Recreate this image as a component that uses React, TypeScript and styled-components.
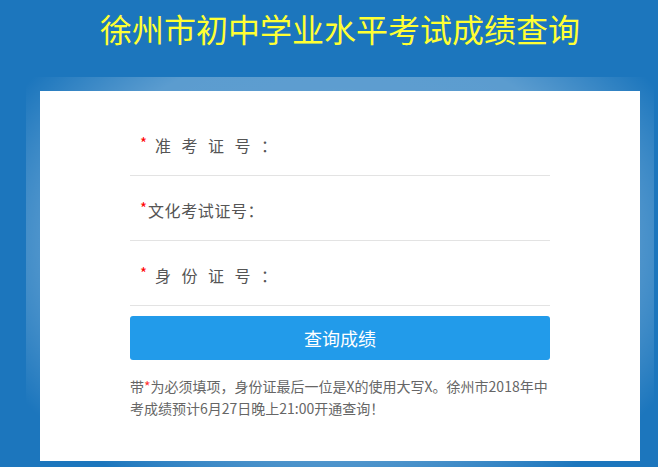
import { createGlobalStyle, styled } from "styled-components";

const GlobalStyle = createGlobalStyle`
  html, body {
    margin: 0;
    padding: 0;
    overflow: hidden;
    background: #1c76bd;
  }
  body {
    font-family: "Microsoft YaHei", "Noto Sans CJK SC", sans-serif;
  }
`;

const Page = styled.div`
  width: 680px;
  height: 467px;
  overflow: hidden;
  background: #1c76bd;
`;

const Title = styled.h1`
  margin: 0;
  height: 77px;
  padding-top: 9px;
  box-sizing: border-box;
  text-align: center;
  font-size: 32px;
  font-weight: normal;
  line-height: 38px;
  color: #ffff33;
`;

const Stage = styled.div`
  margin: 0 26px;
  padding: 14px;
  background: radial-gradient(
    farthest-corner at 50% 42%,
    rgba(255, 255, 255, 0.32) 0%,
    rgba(255, 255, 255, 0.28) 62%,
    rgba(255, 255, 255, 0) 86%
  );
`;

const Card = styled.div`
  height: 370px;
  box-sizing: border-box;
  background: #fff;
  padding: 20px 90px 0;
`;

const Row = styled.div`
  display: flex;
  align-items: center;
  padding: 22px 0 18px 10px;
  border-bottom: 1px solid #e3e3e3;
`;

const Star = styled.span`
  color: #ff0000;
  font-size: 15px;
  line-height: 24px;
  position: relative;
  top: -2px;
`;

const Label = styled.span<{ $spread?: boolean }>`
  color: #555;
  font-size: 16px;
  line-height: 24px;
  letter-spacing: ${(p) => (p.$spread ? "10.5px" : "0.6px")};
  margin-left: ${(p) => (p.$spread ? "8px" : "1px")};
  white-space: nowrap;
`;

const Input = styled.input`
  flex: 1;
  border: none;
  outline: none;
  background: transparent;
  font-size: 16px;
  height: 24px;
  padding: 0 8px;
`;

const Submit = styled.button`
  display: block;
  width: 100%;
  height: 44px;
  margin-top: 10px;
  border: none;
  border-radius: 3px;
  background: #229bea;
  color: #fff;
  font-family: inherit;
  font-size: 18px;
  cursor: pointer;
`;

const Note = styled.p`
  margin: 15px 0 0;
  font-size: 14px;
  line-height: 22px;
  color: #666;

  em {
    font-style: normal;
    color: #ff3333;
  }
`;

const fields = [
  { label: "准考证号：", spread: true },
  { label: "文化考试证号：", spread: false },
  { label: "身份证号：", spread: true },
];

export default function App() {
  return (
    <>
      <GlobalStyle />
      <Page>
        <Title>徐州市初中学业水平考试成绩查询</Title>
        <Stage>
          <Card>
            {fields.map((f) => (
              <Row key={f.label}>
                <Star>*</Star>
                <Label $spread={f.spread}>{f.label}</Label>
                <Input type="text" />
              </Row>
            ))}
            <Submit>查询成绩</Submit>
            <Note>
              带<em>*</em>为必须填项，身份证最后一位是X的使用大写X。徐州市2018年中考成绩预计6月27日晚上21:00开通查询！
            </Note>
          </Card>
        </Stage>
      </Page>
    </>
  );
}
